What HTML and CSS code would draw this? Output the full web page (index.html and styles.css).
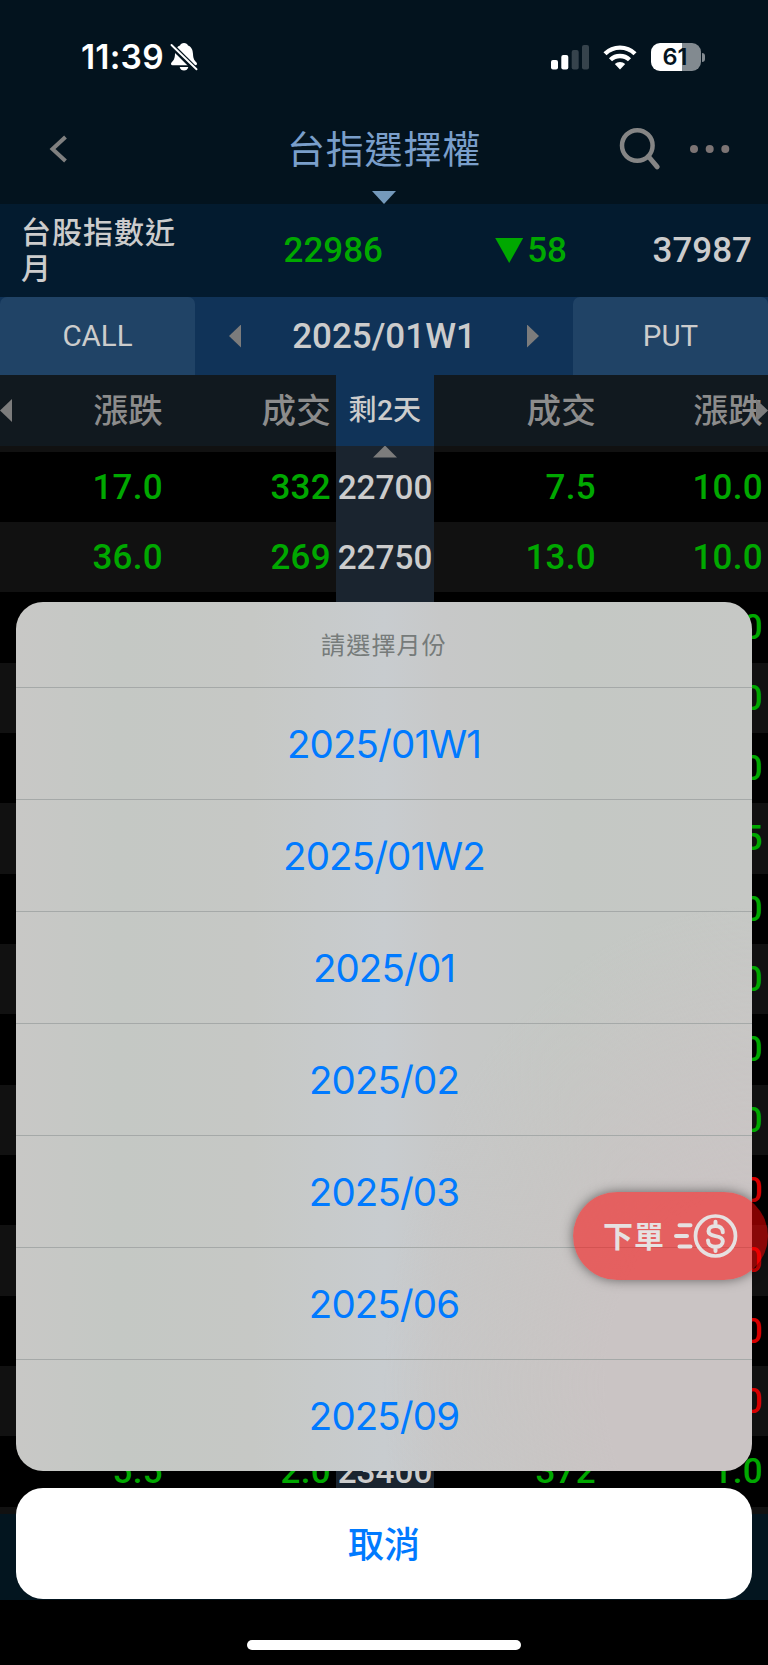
FILE: index.html
```html
<!DOCTYPE html>
<html lang="zh-Hant">
<head>
    <meta charset="UTF-8">
    <meta name="viewport" content="width=device-width, initial-scale=1.0">
    <title>台指選擇權</title>
    <link rel="stylesheet" href="styles.css">
</head>
<body>
    <div class="screen">
        <!-- Status bar -->
        <div class="status-bar">
            <span class="time">11:39</span>
            <svg class="bell" width="28" height="30" viewBox="0 0 28 30">
                <path d="M14 1c-2 0-3.600 1.100-4 2.600C6.500 5 5.200 8 5 12c-.2 5-1.500 6.500-3.500 8.500C.5 21.700 1 23.300 2.500 23.300h23c1.500 0 2-1.600 1-2.800-2-2-3.300-3.500-3.500-8.500-.2-4-1.500-7-5-8.400C17.600 2.100 16 1 14 1z" fill="#fff"/>
                <path d="M9.700 25h8.600c-.5 2.300-2.100 3.600-4.300 3.600S10.200 27.300 9.700 25z" fill="#fff"/>
                <path d="M0 2l27 27" stroke="#03131e" stroke-width="5.500"/>
                <path d="M1.500 3L26.500 27.300" stroke="#fff" stroke-width="1.900" stroke-linecap="round"/>
            </svg>
            <svg class="signal" width="38" height="25" viewBox="0 0 38 25">
                <rect x="0" y="15" width="7" height="9.500" rx="2" fill="#fff"/>
                <rect x="10.300" y="10" width="7" height="14.500" rx="2" fill="#fff"/>
                <rect x="20.700" y="5" width="7" height="19.500" rx="2" fill="#36434c"/>
                <rect x="31" y="0" width="7" height="24.500" rx="2" fill="#36434c"/>
            </svg>
            <svg class="wifi" width="34" height="25" viewBox="0 0 34 25">
                <g fill="none" stroke="#fff" stroke-width="4.400">
                    <path d="M2 8.800a21.400 21.400 0 0 1 30 0"/>
                    <path d="M7.500 14.800a13.600 13.600 0 0 1 19 0"/>
                </g>
                <path d="M17 24.500l-5.200-5.400a7.500 7.500 0 0 1 10.400 0z" fill="#fff"/>
            </svg>
            <div class="battery">61</div>
            <div class="battery-cap"></div>
        </div>

        <!-- Title bar -->
        <div class="nav">
            <svg class="back" width="20" height="32" viewBox="0 0 20 32">
                <path d="M16.500 4L3.500 16l13 12" fill="none" stroke="#808080" stroke-width="4"/>
            </svg>
            <h1>台指選擇權</h1>
            <svg class="search" width="42" height="44" viewBox="0 0 42 44">
                <circle cx="18.300" cy="18.500" r="15.300" fill="none" stroke="#858585" stroke-width="4.500"/>
                <path d="M29.500 29.500l8.700 10.300" stroke="#858585" stroke-width="5" stroke-linecap="round"/>
            </svg>
            <svg class="more" width="40" height="8" viewBox="0 0 40 8">
                <circle cx="4" cy="4" r="4"/>
                <circle cx="19.700" cy="4" r="4"/>
                <circle cx="35.300" cy="4" r="4"/>
            </svg>
        </div>
        <div class="title-arrow"></div>

        <!-- Index quote -->
        <div class="quote">
            <div class="quote-name">台股指數近月</div>
            <div class="quote-price">22986</div>
            <div class="quote-change"><i class="down"></i>58</div>
            <div class="quote-volume">37987</div>
        </div>

        <div class="tabs">
            <div class="tab">CALL</div>
            <div class="month">
                <i class="arrow-left"></i>
                <span>2025/01W1</span>
                <i class="arrow-right"></i>
            </div>
            <div class="tab">PUT</div>
        </div>

        <div class="row head">
            <i class="arrow-left edge-left"></i>
            <span>漲跌</span><span>成交</span><span class="days">剩2天</span><span>成交</span><span>漲跌</span>
            <i class="arrow-right edge-right"></i>
        </div>

        <!-- Option chain -->
        <div class="chain">
            <div class="row gap"><i></i><i></i><i class="strike"></i><i></i><i></i></div>
            <i class="strike-arrow"></i>
            <div class="row"><span>17.0</span><span>332</span><span class="strike">22700</span><span>7.5</span><span>10.0</span></div>
            <div class="row"><span>36.0</span><span>269</span><span class="strike">22750</span><span>13.0</span><span>10.0</span></div>
            <div class="row"><span></span><span></span><span class="strike"></span><span></span><span>0</span></div>
            <div class="row"><span></span><span></span><span class="strike"></span><span></span><span>0</span></div>
            <div class="row"><span></span><span></span><span class="strike"></span><span></span><span>0</span></div>
            <div class="row"><span></span><span></span><span class="strike"></span><span></span><span>5</span></div>
            <div class="row"><span></span><span></span><span class="strike"></span><span></span><span>0</span></div>
            <div class="row"><span></span><span></span><span class="strike"></span><span></span><span>0</span></div>
            <div class="row"><span></span><span></span><span class="strike"></span><span></span><span>0</span></div>
            <div class="row"><span></span><span></span><span class="strike"></span><span></span><span>0</span></div>
            <div class="row"><span></span><span></span><span class="strike"></span><span></span><span class="up">0</span></div>
            <div class="row"><span></span><span></span><span class="strike"></span><span></span><span class="up">0</span></div>
            <div class="row"><span></span><span></span><span class="strike"></span><span></span><span class="up">0</span></div>
            <div class="row"><span></span><span></span><span class="strike"></span><span></span><span class="up">0</span></div>
            <div class="row"><span>5.5</span><span>2.0</span><span class="strike">23400</span><span>372</span><span>1.0</span></div>
        </div>
        <div class="toolbar"></div>

        <!-- Month picker -->
        <div class="action-sheet">
            <div class="sheet">
                <div class="sheet-title">請選擇月份</div>
                <div class="option">2025/01W1</div>
                <div class="option">2025/01W2</div>
                <div class="option">2025/01</div>
                <div class="option">2025/02</div>
                <div class="option">2025/03</div>
                <div class="option">2025/06</div>
                <div class="option">2025/09</div>
            </div>
            <div class="cancel">取消</div>
            <div class="home-indicator"></div>
        </div>

        <!-- Floating order button -->
        <div class="order">
            <span>下單</span>
            <svg width="64" height="46" viewBox="0 0 64 46" fill="none" stroke="#e6e1e1" stroke-width="4" stroke-linecap="round">
                <path d="M5.500 12.300h11M2 23h11M5.500 33.500h11"/>
                <circle cx="41.500" cy="23" r="20" stroke-width="3.700"/>
                <path d="M48.800 19.300c0-4-3-6.300-7.300-6.300s-7 2.100-7 5.300c0 3.100 2.600 4 7 4.800s7.300 1.900 7.300 5.200-3 5.500-7.300 5.500-7.500-2.300-7.500-6.300M41.500 8.800v4M41.500 34v4"/>
            </svg>
        </div>
    </div>
</body>
</html>
```
FILE: styles.css
```css
* {
    box-sizing: border-box;
}

body {
    margin: 0;
    background-color: #000;
    font-family: Roboto, "Noto Sans CJK TC", sans-serif;
}

.screen {
    position: relative;
    width: 768px;
    height: 1665px;
    overflow: hidden;
    display: flex;
    flex-direction: column;
    background: linear-gradient(#03131e 204px, #000 204px);
}

/* Status bar */
.status-bar {
    height: 114px;
    display: flex;
    align-items: center;
    padding-left: 81px;
    color: #fff;
}

.time {
    width: 89px;
    font-family: Inter, sans-serif;
    font-size: 33.500px;
    font-weight: 600;
    letter-spacing: 0.200px;
    white-space: nowrap;
}

.signal {
    margin-left: 353px;
}

.wifi {
    margin-left: 14px;
}

.battery {
    width: 50px;
    height: 28px;
    margin-left: 14px;
    padding-right: 2px;
    border-radius: 9px;
    background: linear-gradient(to right, #fff 31px, #828a90 31px);
    color: #03131e;
    font: 600 23.500px/28px Inter, sans-serif;
    text-align: center;
}

.battery-cap {
    width: 3px;
    height: 9px;
    margin-left: 1px;
    border-radius: 0 4px 4px 0;
    background-color: #828a90;
}

/* Title bar */
.nav {
    height: 77px;
    display: flex;
    align-items: center;
    padding: 0 38px 8px 49px;
}

.nav h1 {
    margin: -5px auto 0 218px;
    color: #7a9fcb;
    font-size: 38px;
    font-weight: 400;
    letter-spacing: 0.800px;
}

.more {
    margin-left: 29px;
    fill: #7c7474;
}

.title-arrow {
    width: 24px;
    height: 13px;
    margin-left: 372px;
    background-color: #7499bb;
    clip-path: polygon(0 0, 100% 0, 50% 100%);
    flex: none;
}

/* Index quote */
.quote {
    height: 93px;
    display: flex;
    align-items: center;
    background-color: #031b2f;
    color: #ccc;
    font-size: 35px;
    font-weight: 500;
    line-height: 93px;
}

.quote-name {
    width: 160px;
    margin-left: 21px;
    font-size: 30px;
    line-height: 36px;
    letter-spacing: 1px;
}

.quote-price {
    width: 202px;
    text-align: right;
    color: #00a800;
}

.quote-change {
    width: 184px;
    display: flex;
    align-items: center;
    justify-content: flex-end;
    color: #00a800;
}

.quote-volume {
    width: 185px;
    text-align: right;
}

.down {
    width: 28px;
    height: 25px;
    margin-right: 4px;
    background-color: #00a800;
    clip-path: polygon(0 0, 100% 0, 50% 100%);
}

/* Tabs */
.tabs {
    height: 78px;
    display: flex;
    background-color: #103358;
    color: #ccc;
}

.tab {
    width: 195px;
    border-radius: 7px 7px 0 0;
    background-color: #204366;
    font-size: 29.500px;
    line-height: 79px;
    text-align: center;
}

.month {
    flex: 1;
    display: flex;
    align-items: center;
    justify-content: space-between;
    padding: 0 34px;
    font-size: 35px;
    font-weight: 500;
}

.arrow-left, .arrow-right {
    width: 12px;
    height: 23px;
    background-color: #7c7c7c;
}

.arrow-left {
    clip-path: polygon(100% 0, 100% 100%, 0 50%);
}

.arrow-right {
    clip-path: polygon(0 0, 100% 50%, 0 100%);
}

/* Table */
.row {
    display: grid;
    grid-template-columns: 168px 168px 98px 167px 167px;
    height: 70.350px;
    color: #00a800;
    font-size: 35px;
    font-weight: 500;
    line-height: 71px;
    letter-spacing: 0.300px;
    text-align: right;
}

.row span {
    padding-right: 5px;
    white-space: nowrap;
}

.row .strike {
    padding: 0;
    background-color: #1a242f;
    color: #ccc;
    font-size: 33.300px;
    letter-spacing: 0;
    text-align: center;
}

.row .up {
    color: #d80000;
}

.row.head {
    position: relative;
    height: 70.500px;
    background-color: #11191f;
    color: #8c8c8c;
    font-size: 34.500px;
    line-height: 72px;
}

.row .days {
    padding: 0;
    background-color: #103358;
    color: #ccc;
    font-size: 28px;
    text-align: center;
}

.edge-left, .edge-right {
    position: absolute;
    top: 24px;
}

.edge-left {
    left: 0;
}

.edge-right {
    right: 0;
}

.chain {
    position: relative;
    border-bottom: 7px solid #111;
}

/* the marker below the header counts as a child, so the first strike row is odd */
.chain .row:nth-child(odd) {
    background-color: #000;
}

.chain .row:nth-child(even) {
    background-color: #111;
}

.chain .row.gap {
    height: 6px;
    background-color: #111;
}

.strike-arrow {
    position: absolute;
    top: 0;
    left: 373px;
    width: 24px;
    height: 12px;
    background-color: #7c7c7c;
    clip-path: polygon(50% 0, 100% 100%, 0 100%);
}

.toolbar {
    height: 86px;
    background-color: #03151f;
}

/* Month picker */
.action-sheet {
    position: absolute;
    top: 601.500px;
    left: 16px;
    right: 16px;
    color: #007aff;
    text-align: center;
}

.sheet {
    height: 869.500px;
    border-radius: 27px;
    background:
        radial-gradient(ellipse 50% 55% at 100% 90%, rgba(202, 196, 196, 1) 40%, rgba(202, 196, 196, 0)),
        linear-gradient(to right, #c8c8c6, #c4c8c4 14%, #c6c8c5 32%, #c8cccf 50%, #c7c8c8 58%, #c4c8c4 75%, #c6c8c5);
}

.sheet-title {
    height: 85px;
    color: #767b7a;
    font-size: 24px;
    line-height: 88px;
    letter-spacing: 1.200px;
}

.option {
    height: 112.050px;
    border-top: 1px solid #a5a9a8;
    font-family: Inter, sans-serif;
    font-size: 38.500px;
    line-height: 112px;
    letter-spacing: -0.900px;
}

.cancel {
    height: 111px;
    margin-top: 16.500px;
    border-radius: 27px;
    background-color: #fff;
    font-size: 36px;
    font-weight: 500;
    line-height: 116px;
}

.home-indicator {
    width: 274px;
    height: 10px;
    margin: 41px auto 0;
    border-radius: 5px;
    background-color: #fff;
}

/* Floating order button */
.order {
    position: absolute;
    top: 1192px;
    left: 573px;
    width: 195px;
    height: 88px;
    display: flex;
    align-items: center;
    padding-left: 30px;
    border-radius: 44px;
    background-color: rgba(255, 0, 0, 0.510);
    box-shadow: 0 0 12px rgba(0, 0, 0, 0.500);
    color: #e6e1e1;
    font-size: 30px;
    font-weight: 700;
    letter-spacing: 1px;
}

.order span {
    margin-top: -4px;
}

.order svg {
    margin-left: 9px;
}
```
